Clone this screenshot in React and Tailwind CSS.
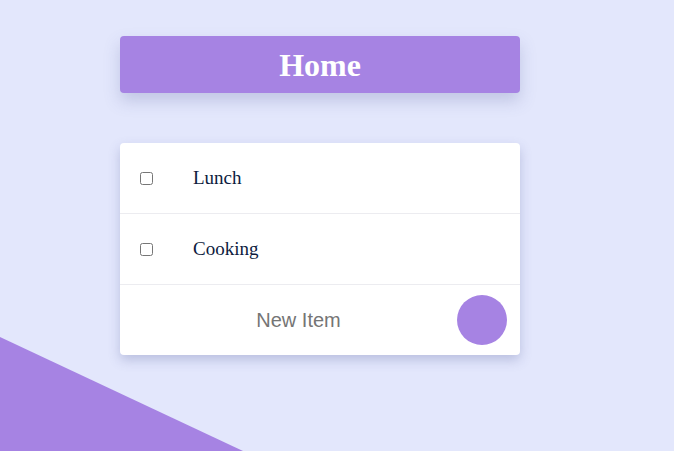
import React from 'react';

const items = ['Lunch', 'Cooking'];

const App = () => {
  return (
    <div className="relative min-h-screen w-full overflow-hidden bg-[#e3e7fc]">
      {/* corner wedge */}
      <div className="absolute bottom-0 left-0 h-[114px] w-[243px] bg-[#a683e3] [clip-path:polygon(0_0,100%_100%,0_100%)]" />

      <div className="relative ml-[120px] flex w-[400px] flex-col pt-[36px]">
        <div className="flex h-[57px] items-center justify-center rounded bg-[#a683e3] shadow-[0_8px_16px_rgba(90,100,160,0.25)]">
          <h1 className="font-['Liberation_Serif',serif] text-[32px] font-bold text-white">Home</h1>
        </div>

        <div className="mt-[50px] overflow-hidden rounded bg-white shadow-[0_5px_12px_rgba(90,100,160,0.3)]">
          {items.map((item) => (
            <div key={item} className="flex h-[71px] items-center border-b border-[#ececf0] pl-5">
              <input type="checkbox" className="h-[13px] w-[13px]" />
              <span className="ml-[40px] font-['Liberation_Serif',serif] text-[19px] text-[#0d1b3e]">{item}</span>
            </div>
          ))}
          <div className="flex h-[70px] items-center pl-5 pr-[13px]">
            <input
              type="text"
              placeholder="New Item"
              className="min-w-0 flex-1 bg-transparent text-center font-['Liberation_Sans',sans-serif] text-[20px] text-[#333] outline-none placeholder:text-[#757575]"
            />
            <button className="h-[50px] w-[50px] shrink-0 rounded-full bg-[#a683e3]" />
          </div>
        </div>
      </div>
    </div>
  );
};

export default App;
